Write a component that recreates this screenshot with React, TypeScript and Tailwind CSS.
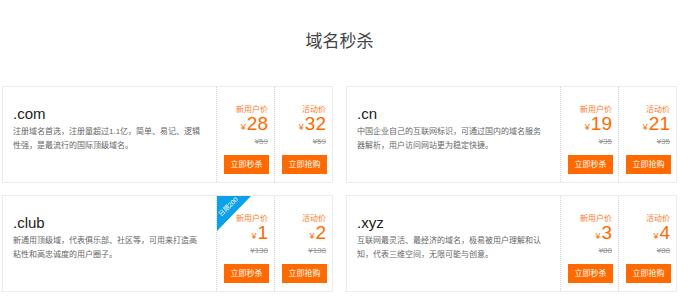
import React from "react";

type Deal = {
  name: string;
  lines: string[];
  newPrice: string;
  actPrice: string;
  oldPrice: string;
  badge?: string;
};

const deals: Deal[] = [
  {
    name: ".com",
    lines: ["注册域名首选，注册量超过1.1亿，简单、易记、逻辑", "性强，是最流行的国际顶级域名。"],
    newPrice: "28",
    actPrice: "32",
    oldPrice: "59",
  },
  {
    name: ".cn",
    lines: ["中国企业自己的互联网标识，可通过国内的域名服务", "器解析，用户访问网站更为稳定快捷。"],
    newPrice: "19",
    actPrice: "21",
    oldPrice: "35",
  },
  {
    name: ".club",
    lines: ["新通用顶级域，代表俱乐部、社区等，可用来打造高", "粘性和高忠诚度的用户圈子。"],
    newPrice: "1",
    actPrice: "2",
    oldPrice: "138",
    badge: "日限200",
  },
  {
    name: ".xyz",
    lines: ["互联网最灵活、最经济的域名，极易被用户理解和认", "知，代表三维空间，无限可能与创意。"],
    newPrice: "3",
    actPrice: "4",
    oldPrice: "88",
  },
];

// one price column: label, big price, struck-out price, button
const PriceCol = ({
  label,
  price,
  oldPrice,
  action,
  badge,
}: {
  label: string;
  price: string;
  oldPrice: string;
  action: string;
  badge?: string;
}) => {
  return (
    <div className="relative w-[58px] border-l border-dotted border-[#d6d6d6] flex flex-col items-end pr-[6px] pt-[19px]">
      {badge && (
        <div className="absolute left-0 top-0 w-[34px] h-[35px] bg-[#0aa0ea] [clip-path:polygon(0_0,100%_0,0_100%)]">
          <span className="absolute left-[-1px] top-[7px] w-[24px] text-center text-white text-[6.5px] leading-[7px] -rotate-45 whitespace-nowrap">
            {badge}
          </span>
        </div>
      )}
      <span className="text-[8px] leading-[8px] text-[#ff7a26]">{label}</span>
      <span className="text-[19px] leading-[20px] text-[#ff6a00]">
        <span className="text-[9px] mr-[1px]">¥</span>
        {price}
      </span>
      <span className="text-[8px] leading-[10px] text-[#999] line-through">¥{oldPrice}</span>
      <button className="mt-[8px] w-[45px] h-[19px] bg-[#ff6a00] text-white text-[8px] leading-[19px] -mr-[1px]">
        {action}
      </button>
    </div>
  );
};

const DealCard = ({ deal }: { deal: Deal }) => {
  return (
    <div className="h-[97px] border border-[#ececec] flex bg-white">
      <div className="flex-1 pl-[10px] pt-[17px]">
        <h3 className="text-[15px] leading-[20px] text-[#222]">{deal.name}</h3>
        <p className="text-[8px] leading-[13.5px] text-[#666] mt-[1px] whitespace-nowrap">
          {deal.lines.map((l) => (
            <span key={l} className="block">
              {l}
            </span>
          ))}
        </p>
      </div>
      <PriceCol label="新用户价" price={deal.newPrice} oldPrice={deal.oldPrice} action="立即秒杀" badge={deal.badge} />
      <PriceCol label="活动价" price={deal.actPrice} oldPrice={deal.oldPrice} action="立即抢购" />
    </div>
  );
};

export default function App() {
  return (
    <div
      className="w-[700px] h-[308px] bg-white overflow-hidden"
      style={{ fontFamily: '"Liberation Sans", Arial, "Noto Sans CJK SC", sans-serif' }}
    >
      <div className="ml-[2px] w-[675px]">
        <h2 className="pt-[30px] mb-[32px] text-center text-[17px] leading-[24px] text-[#444]">域名秒杀</h2>
        <div className="grid grid-cols-2 gap-x-[13px] gap-y-[12px]">
          {deals.map((d) => (
            <DealCard key={d.name} deal={d} />
          ))}
        </div>
      </div>
    </div>
  );
}
